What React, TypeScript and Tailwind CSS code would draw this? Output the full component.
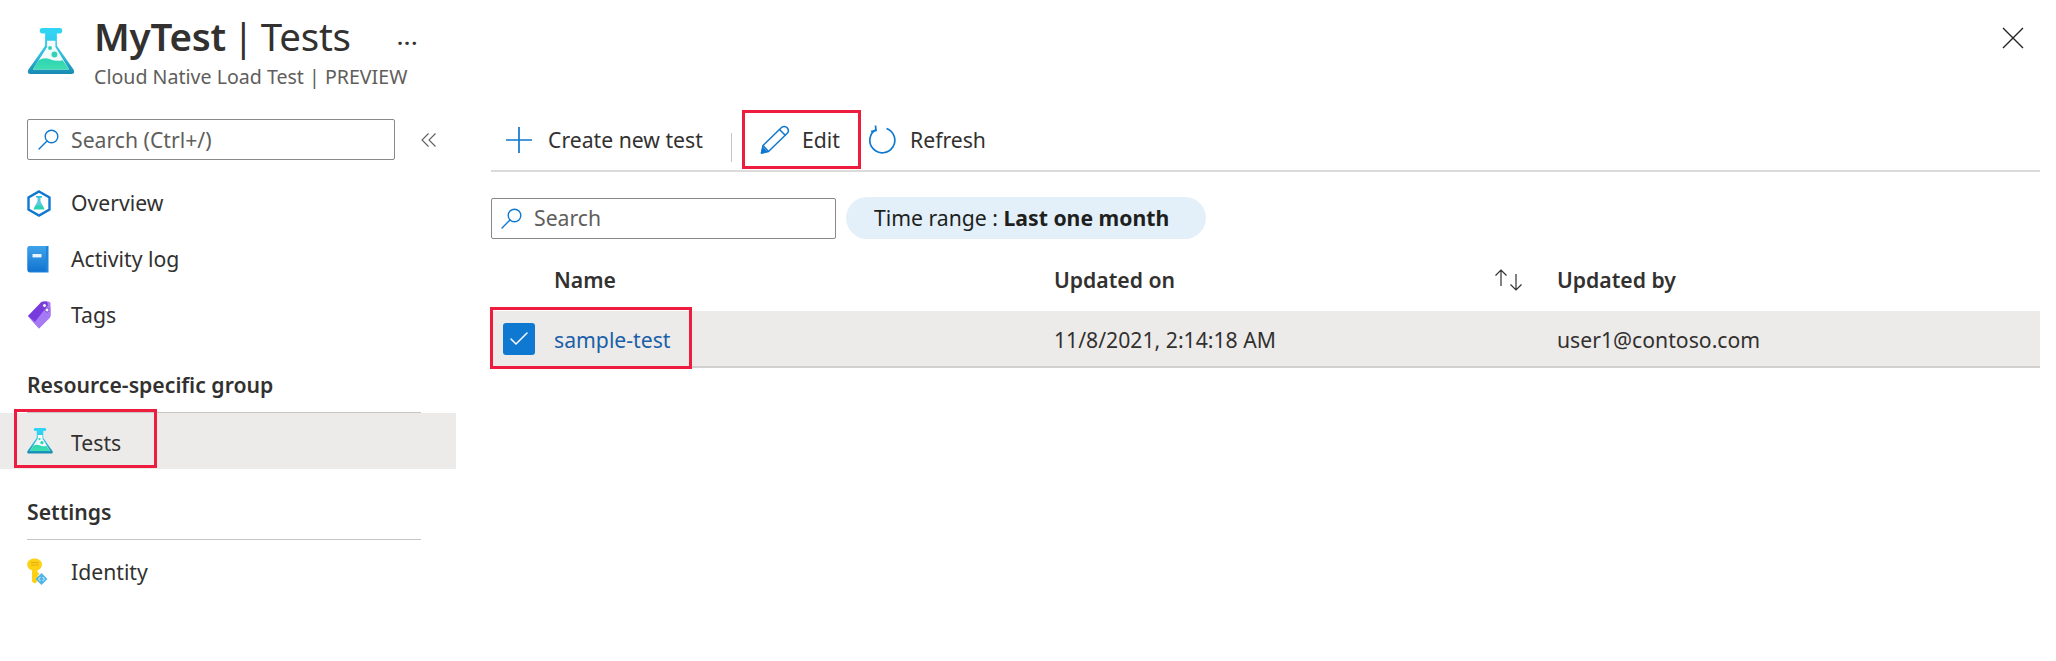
import { Check } from "lucide-react";

const font = "font-['Noto_Sans',sans-serif]";

const Flask = ({ className }: { className: string }) => (
  <svg viewBox="0 0 48 48" className={className}>
    <defs>
      <linearGradient id="flask-body" x1="0" y1="0" x2="0" y2="1">
        <stop offset="0" stopColor="#32d4f5" />
        <stop offset="0.55" stopColor="#32bedd" />
        <stop offset="1" stopColor="#198ab3" />
      </linearGradient>
      <linearGradient id="flask-liquid" x1="0" y1="0" x2="0" y2="1">
        <stop offset="0" stopColor="#2fd3b4" />
        <stop offset="1" stopColor="#3fdfb0" />
      </linearGradient>
    </defs>
    <path d="M18 4H30V18L47 42.5Q49 47 45 47H3Q-1 47 1 42.5L18 18Z" fill="url(#flask-body)" />
    <rect x="12.5" y="0" width="23" height="5.5" rx="2.6" fill="#32d4f5" />
    <path d="M20 13H28.5V19.5L42.5 42.5H5.5L20 19.5Z" fill="#f4fbfd" />
    <path d="M11.5 33Q17 29.5 23 32T36 33L42.5 42.5H5.5Z" fill="url(#flask-liquid)" />
    <circle cx="23" cy="20.5" r="2" fill="#2fd3b4" />
    <circle cx="27.5" cy="27" r="3" fill="#2fd3b4" />
  </svg>
);

const HexFlask = () => (
  <svg viewBox="0 0 24 27" className="h-[27px] w-[24px]">
    <path d="M12 1.5L22.5 7.5V19.5L12 25.5L1.5 19.5V7.5Z" fill="#fff" stroke="#0f78d1" strokeWidth="2.4" />
    <path d="M10.5 7H13.5V11.5L17.5 19H6.5L10.5 11.5Z" fill="#58c9e2" />
    <path d="M8.5 15.5H15.5L17.5 19.5H6.5Z" fill="#2fd3b4" />
    <rect x="9" y="6" width="6" height="1.6" fill="#32bedd" />
  </svg>
);

const BookIcon = () => (
  <svg viewBox="0 0 22 27" className="h-[27px] w-[22px]">
    <defs>
      <linearGradient id="book-fill" x1="0" y1="0" x2="0" y2="1">
        <stop offset="0" stopColor="#3fa3ea" />
        <stop offset="1" stopColor="#1274d1" />
      </linearGradient>
    </defs>
    <path d="M3 0H21.5V26.5H3Q0.5 26.5 0.5 24V2.5Q0.5 0 3 0Z" fill="#1f86db" />
    <path d="M2.5 0H19V25.5H2.5Q0.5 25.5 0.5 23.5V2Q0.5 0 2.5 0Z" fill="url(#book-fill)" />
    <rect x="5.5" y="8" width="9" height="3.4" fill="#e9f4fc" />
  </svg>
);

const TagIcon = () => (
  <svg viewBox="0 0 24 28" className="h-[28px] w-[24px]">
    <path d="M1 15L14 1.5Q15 0.5 17 0.5H21Q23.5 0.5 23.5 3V14Q23.5 16 22.5 17L12 27.5Z" fill="#a67af4" />
    <path d="M1 15L14 1.5Q15 0.5 17 0.5H20L21 4L8 21Z" fill="#773adc" />
    <path d="M8 21L21 5L23.5 6V14Q23.5 16 22.5 17L12 27.5L1 15.5Z" fill="#a67af4" />
    <circle cx="17.5" cy="4.5" r="2" fill="#f2edfc" stroke="#5e2bb8" strokeWidth="0.7" />
    <circle cx="20" cy="9" r="2" fill="#f2edfc" stroke="#5e2bb8" strokeWidth="0.7" />
  </svg>
);

const KeyIcon = () => (
  <svg viewBox="0 0 21 28" className="h-[28px] w-[21px]">
    <path d="M7.5 0.5C11.5 0.5 15 3 15 6.5C15 9.5 13 11.5 10.5 12.3V14L12.5 16L10.5 18L12 19.5L10 21.5V24L7.5 25.5L5 23.5V12.3C2 11.5 0.2 9.5 0.2 6.5C0.2 3 3.5 0.5 7.5 0.5Z" fill="#fcd116" />
    <path d="M4 4.5H11.5M4 7H11.5" stroke="#e8a90e" strokeWidth="1.1" />
    <path d="M14.5 15L20.5 21L14.5 27L8.5 21Z" fill="#50b4e8" />
    <path d="M13.5 19L11.5 21L13.5 23M15.5 19L17.5 21L15.5 23" stroke="#e6f5fd" strokeWidth="1" fill="none" />
  </svg>
);

const SearchIcon = () => (
  <svg viewBox="0 0 21 21" className="h-[21px] w-[21px]" fill="none" stroke="#0f78d1" strokeWidth="1.4">
    <circle cx="13.5" cy="7.5" r="6.3" />
    <path d="M9 12L1 20" strokeLinecap="round" />
  </svg>
);

const PencilIcon = () => (
  <svg viewBox="0 0 30 29" className="h-[29px] w-[30px]" fill="none" stroke="#0f78d1" strokeWidth="1.5" strokeLinejoin="round">
    <path d="M8.5 26.5L1.5 28L3 20.5L21.5 2.5Q24 0.5 27 2.5Q29.5 5.5 27.5 8Z" />
    <path d="M3 20.5L8.5 26.5M19.5 4.5L25.5 10.5" />
    <path d="M1.5 28L3 23L6.5 26.5Z" fill="#0f78d1" />
  </svg>
);

const RefreshIcon = () => (
  <svg viewBox="0 0 28 30" className="h-[30px] w-[28px]" fill="none" stroke="#0f78d1" strokeWidth="1.7">
    <path d="M18.5 3.5A12.5 12.5 0 1 1 8 4.5" />
    <path d="M7.5 0.5L8 5.5L3 6.5" />
  </svg>
);

const PlusIcon = () => (
  <svg viewBox="0 0 28 28" className="h-[28px] w-[28px]" stroke="#0f78d1" strokeWidth="1.7">
    <path d="M14 1V27M1 14H27" />
  </svg>
);

const CloseIcon = () => (
  <svg viewBox="0 0 22 22" className="mt-[27px] h-[22px] w-[22px]" stroke="#252423" strokeWidth="1.4">
    <path d="M1 1L21 21M21 1L1 21" />
  </svg>
);

const CollapseIcon = () => (
  <svg viewBox="0 0 16 14" className="h-[14px] w-[16px]" fill="none" stroke="#605e5c" strokeWidth="1.1">
    <path d="M7.5 0.5L1 7L7.5 13.5M14.5 0.5L8 7L14.5 13.5" />
  </svg>
);

const SortIcon = () => (
  <svg viewBox="0 0 30 22" className="h-[22px] w-[30px]" fill="none" stroke="#323130" strokeWidth="1.2">
    <path d="M7 1V17M1.5 6.5L7 1L12.5 6.5" />
    <path d="M22 5V21M16.5 15.5L22 21L27.5 15.5" />
  </svg>
);

const NavItem = ({ icon, label }: { icon: React.ReactNode; label: string }) => (
  <div className="flex h-[56px] items-center">
    <div className="flex w-[44px] shrink-0 items-center">{icon}</div>
    <span className="text-[21.2px] leading-[28px] text-[#323130]">{label}</span>
  </div>
);

const GroupHeader = ({ label }: { label: string }) => (
  <div className="mr-[35px] border-b border-[#c8c6c4] text-[21.2px] font-semibold leading-[28px] text-[#323130]">
    <div className="pb-[13px]">{label}</div>
  </div>
);

export default function App() {
  return (
    <div className={`${font} relative h-[661px] w-[2056px] overflow-hidden bg-white`}>
      <header className="flex h-[110px] items-start justify-between pl-[27px] pr-[32px]">
        <div className="flex items-start">
          <Flask className="mt-[28px] h-[47px] w-[48px]" />
          <div className="ml-[19px]">
            <h1 className="mt-[11px] text-[38.5px] font-semibold leading-[50px] tracking-[-0.2px] text-[#323130] [word-spacing:-3px]">
              MyTest <span className="font-normal">| Tests</span>
            </h1>
            <p className="mt-[4px] text-[19.6px] leading-[24px] text-[#605e5c]">Cloud Native Load Test | PREVIEW</p>
          </div>
        </div>
        <CloseIcon />
      </header>
      <div className="absolute left-[397px] top-[23px] text-[22px] font-semibold leading-[26px] tracking-[1px] text-[#323130]">...</div>

      <div className="flex">
        <aside className="w-[456px] shrink-0">
          <div className="flex items-center pl-[27px] pt-[9px]">
            <div className="flex h-[41px] w-[368px] items-center rounded-[2px] border border-[#8a8886] pl-[10px]">
              <SearchIcon />
              <span className="ml-[12px] text-[21.2px] leading-[28px] text-[#605e5c]">Search (Ctrl+/)</span>
            </div>
            <div className="ml-[26px]">
              <CollapseIcon />
            </div>
          </div>

          <nav className="mt-[15px] pl-[27px]">
            <NavItem icon={<HexFlask />} label="Overview" />
            <NavItem icon={<BookIcon />} label="Activity log" />
            <NavItem icon={<TagIcon />} label="Tags" />
          </nav>

          <div className="mt-[28px] pl-[27px]">
            <GroupHeader label="Resource-specific group" />
          </div>
          <div className="relative flex h-[56px] items-center bg-[#edebe9] pl-[27px]">
            <div className="flex w-[44px] shrink-0 items-center">
              <Flask className="h-[26px] w-[26px]" />
            </div>
            <span className="pt-[3px] text-[21.2px] leading-[28px] text-[#323130]">Tests</span>
            <div className="absolute left-[14px] top-[-4px] h-[59px] w-[143px] border-[3px] border-[#ee1c3e]" />
          </div>

          <div className="mt-[29px] pl-[27px]">
            <GroupHeader label="Settings" />
            <div className="mt-[4px]">
              <NavItem icon={<KeyIcon />} label="Identity" />
            </div>
          </div>
        </aside>

        <main className="ml-[35px] mr-[16px] flex-1">
          <div className="flex h-[62px] items-start border-b-2 border-[#dddbd9]">
            <div className="flex h-[59px] w-[240px] items-center pl-[14px]">
              <PlusIcon />
              <span className="ml-[15px] text-[21.2px] leading-[28px] text-[#323130]">Create new test</span>
            </div>
            <div className="mt-[23px] h-[29px] w-[1px] bg-[#c8c6c4]" />
            <div className="ml-[10px] flex h-[59px] w-[119px] items-center border-[3px] border-[#ee1c3e] pl-[15px]">
              <PencilIcon />
              <span className="ml-[12px] text-[21.2px] leading-[28px] text-[#323130]">Edit</span>
            </div>
            <div className="ml-[7px] flex h-[59px] items-center">
              <RefreshIcon />
              <span className="ml-[14px] text-[21.2px] leading-[28px] text-[#323130]">Refresh</span>
            </div>
          </div>

          <div className="mt-[25px] flex items-center">
            <div className="flex h-[41px] w-[345px] items-center rounded-[2px] border border-[#8a8886] pl-[9px]">
              <SearchIcon />
              <span className="ml-[12px] text-[21.2px] leading-[28px] text-[#605e5c]">Search</span>
            </div>
            <div className="ml-[10px] flex h-[42px] w-[360px] items-center rounded-full bg-[#e3f0fa] pl-[28px] text-[21.2px] leading-[28px] text-[#201f1e]">
              Time range :&nbsp;<span className="font-bold">Last one month</span>
            </div>
          </div>

          <div className="flex h-[72px] items-center pt-[9px] text-[21.2px] font-semibold leading-[28px] text-[#323130]">
            <span className="ml-[63px] w-[500px]">Name</span>
            <span className="w-[440px]">Updated on</span>
            <div className="w-[63px]">
              <SortIcon />
            </div>
            <span>Updated by</span>
          </div>

          <div className="relative flex h-[57px] items-center border-b-2 border-[#d2d0ce] bg-[#edebe9] text-[21.2px] leading-[28px] text-[#323130]">
            <div className="ml-[12px] flex h-[32px] w-[32px] items-center justify-center rounded-[3px] bg-[#0f78d1]">
              <Check className="h-[24px] w-[24px] text-white" strokeWidth={1.5} />
            </div>
            <span className="ml-[19px] w-[500px] pt-[2px] text-[#1a5fa8]">sample-test</span>
            <span className="w-[503px] pt-[2px]">11/8/2021, 2:14:18 AM</span>
            <span className="pt-[2px]">user1@contoso.com</span>
            <div className="absolute left-[-1px] top-[-4px] h-[62px] w-[202px] border-[3px] border-[#ee1c3e]" />
          </div>
        </main>
      </div>
    </div>
  );
}
